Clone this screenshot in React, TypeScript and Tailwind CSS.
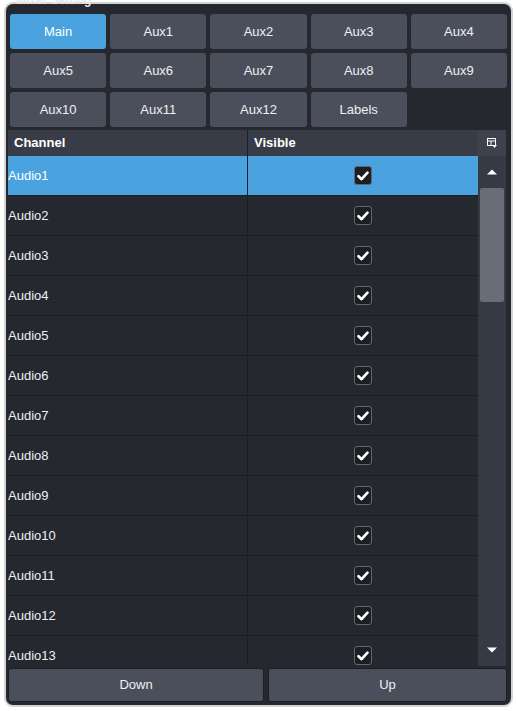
import React from "react";

const TABS = ["Main", "Aux1", "Aux2", "Aux3", "Aux4", "Aux5", "Aux6", "Aux7", "Aux8", "Aux9", "Aux10", "Aux11", "Aux12", "Labels"];
const CHANNELS = Array.from({ length: 13 }, (_, i) => `Audio${i + 1}`);

function Check() {
  return (
    <span className="flex h-[19px] w-[18px] items-center justify-center rounded-[3px] border border-[#62666e] bg-[#1c1e22]">
      <svg width="12" height="10" viewBox="0 0 12 10">
        <path d="M1.5 5.2 L4.6 8.2 L10.5 1.6" stroke="#fff" strokeWidth="2.6" fill="none" strokeLinecap="round" strokeLinejoin="round" />
      </svg>
    </span>
  );
}

export default function App() {
  return (
    <div className="h-[711px] w-[516px] overflow-hidden bg-white pl-[4px] pt-[2px] font-['Liberation_Sans',Arial,sans-serif]">
      <div className="relative h-[705px] w-[509px] rounded-[9px] border-[2px] border-[#d3d3d3] bg-[#25282e]">
        <div className="absolute left-[10px] top-[-13px] text-[12px] font-bold text-[#e8e8e8]">Mixer Setting</div>
        <div className="grid grid-cols-5 gap-[4px] px-[4px] pt-[10px]">
          {TABS.map((t) => (
            <div
              key={t}
              className={`flex h-[35px] items-center justify-center rounded-[3px] text-[13px] ${t === "Main" ? "bg-[#4aa3de] text-white" : "bg-[#4b4f5b] text-[#eef0f3]"}`}
            >
              {t}
            </div>
          ))}
        </div>

        <div className="ml-[2px] mt-[3px] flex w-[498px]">
          <div className="w-[470px]">
            <div className="flex h-[26px] bg-[#383c46] text-[13px] font-bold text-white">
              <div className="flex w-[240px] items-center border-r border-[#1e2024] pl-[6px]">Channel</div>
              <div className="flex flex-1 items-center pl-[6px]">Visible</div>
            </div>
            <div className="h-[510px] overflow-hidden">
              {CHANNELS.map((c, i) => (
                <div
                  key={c}
                  className={`flex h-[40px] border-b border-[#1c1e22] text-[13px] ${i === 0 ? "bg-[#4aa3de] text-white" : "bg-[#25282e] text-[#eef0f3]"}`}
                >
                  <div className="flex w-[240px] items-center border-r border-[#1c1e22]">{c}</div>
                  <div className="flex flex-1 items-center justify-center">
                    <Check />
                  </div>
                </div>
              ))}
            </div>
          </div>
          <div className="flex w-[28px] flex-col bg-[#363a44]">
            <div className="flex h-[26px] items-center justify-center bg-[#3d424c]">
              <svg width="12" height="12" viewBox="0 0 12 12">
                <rect x="1.5" y="1.5" width="8" height="7" fill="none" stroke="#fff" strokeWidth="1" />
                <line x1="1.5" y1="4" x2="9.5" y2="4" stroke="#fff" strokeWidth="1" />
                <line x1="5" y1="4" x2="5" y2="8.5" stroke="#fff" strokeWidth="1" />
                <path d="M6 8 L11 8 L8.5 11 Z" fill="#fff" />
              </svg>
            </div>
            <div className="flex h-[32px] items-center justify-center">
              <svg width="10" height="6" viewBox="0 0 10 6">
                <path d="M0 5.5 L5 0.5 L10 5.5 Z" fill="#fff" />
              </svg>
            </div>
            <div className="mx-[2px] h-[114px] rounded-[2px] bg-[#686d78]" />
            <div className="flex-1" />
            <div className="flex h-[32px] items-center justify-center">
              <svg width="10" height="6" viewBox="0 0 10 6">
                <path d="M0 0.5 L5 5.5 L10 0.5 Z" fill="#fff" />
              </svg>
            </div>
          </div>
        </div>

        <div className="ml-[2px] mt-[2px] flex gap-[4px] text-[13px] text-[#eef0f3]">
          <div className="flex h-[34px] w-[256px] items-center justify-center rounded-[3px] border border-[#1c1e22] bg-[#4b4f5b]">Down</div>
          <div className="flex h-[34px] w-[239px] items-center justify-center rounded-[3px] border border-[#1c1e22] bg-[#4b4f5b]">Up</div>
        </div>
      </div>
    </div>
  );
}
